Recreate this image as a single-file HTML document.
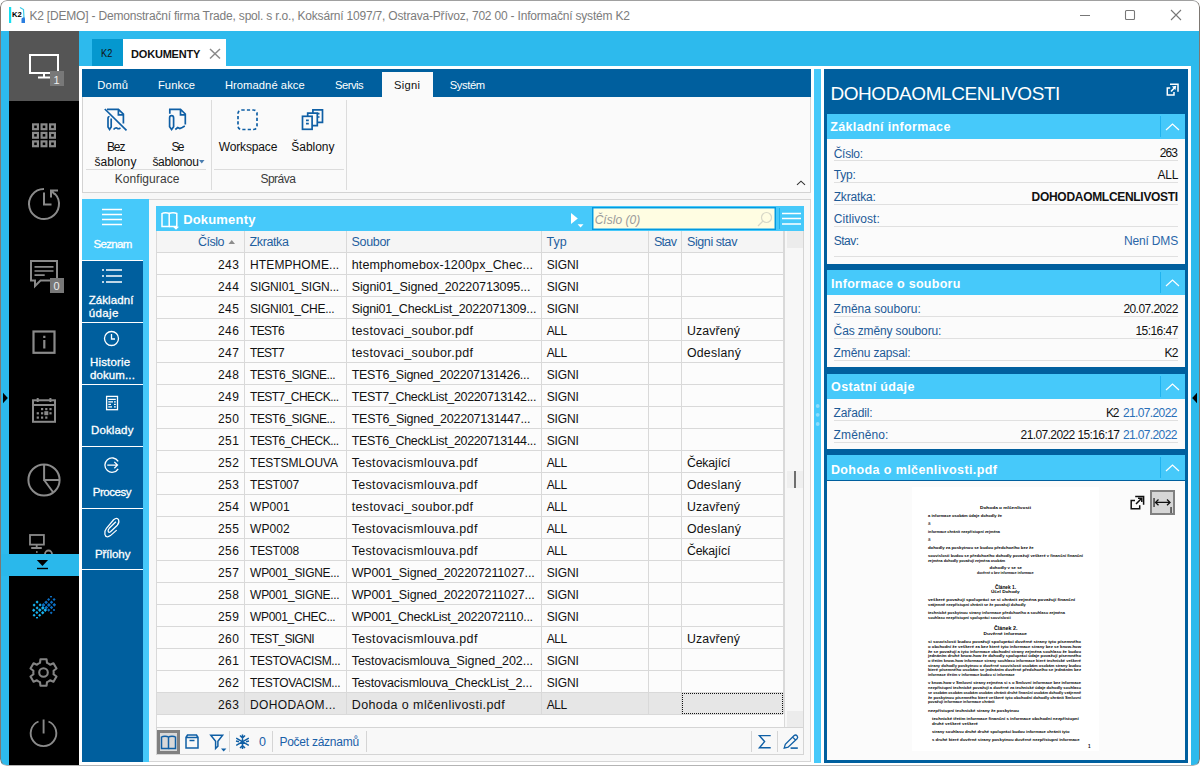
<!DOCTYPE html>
<html><head><meta charset="utf-8">
<style>
*{box-sizing:border-box;margin:0;padding:0}
html,body{width:1200px;height:766px;overflow:hidden;background:#fff;font-family:"Liberation Sans",sans-serif}
.a{position:absolute}
.t{position:absolute;white-space:nowrap;line-height:1}
#win{position:absolute;left:0;top:0;width:1200px;height:766px;background:#fff;overflow:hidden;border-radius:7px}
</style></head><body>
<div id="win">
 <div class="a" style="left:1px;top:31px;width:1198px;height:734px;background:#2dbaed"></div>
 <div class="a" style="left:9px;top:31px;width:70px;height:734px;background:#000"></div>
 <div class="a" style="left:9px;top:31px;width:70px;height:70px;background:#555"></div>
 <div class="a" style="left:79px;top:66px;width:1112px;height:699px;background:#fff"></div>
 <div class="a" style="left:82px;top:69px;width:729px;height:693px;background:#f7f7f7"></div>
 <div class="a" style="left:814px;top:69px;width:7px;height:694px;background:#46c9fa"></div>
 <!-- K2 logo -->
 <svg class="a" style="left:0;top:0" width="30" height="30" viewBox="0 0 30 30">
  <rect x="9" y="7" width="2.2" height="16" fill="#14def0"/>
  <text x="12" y="17" font-family="Liberation Sans" font-weight="700" font-size="6.8" fill="#000" textLength="9.8" lengthAdjust="spacingAndGlyphs">K2</text>
  <path d="M20 7.5 L23.5 9.5 L24 18" stroke="#3ccbe8" stroke-width="1.2" fill="none"/>
  <path d="M21.5 18.5 Q25 16 25 19 L25 23 L21.5 23 Z" fill="#2a7ee0"/>
 </svg>
 <!-- window controls -->
 <svg class="a" style="left:1060px;top:0" width="140" height="31" viewBox="1060 0 140 31">
  <path d="M1080 15.5H1090" stroke="#777" stroke-width="1.1"/>
  <rect x="1125.5" y="10.5" width="9" height="9" rx="1" stroke="#777" stroke-width="1.1" fill="none"/>
  <path d="M1171 10L1181 20M1181 10L1171 20" stroke="#777" stroke-width="1.1"/>
 </svg>

 <!-- sidebar icons -->
 <svg class="a" style="left:0;top:31px" width="80" height="735" viewBox="0 31 80 735">
  <!-- monitor -->
  <rect x="30" y="55" width="28" height="18" stroke="#fff" stroke-width="2" fill="none"/>
  <path d="M44 74V77M38 77.5H51" stroke="#fff" stroke-width="2"/>
  <rect x="50" y="71" width="14" height="15" fill="#787878"/>
  <text x="53.5" y="83.5" font-family="Liberation Sans" font-size="11" fill="#eee">1</text>
  <!-- apps grid -->
  <g stroke="#8a8a8a" stroke-width="2.2" fill="none">
   <rect x="33.1" y="124.4" width="4.8" height="4.8"/><rect x="41.6" y="124.4" width="4.8" height="4.8"/><rect x="50.1" y="124.4" width="4.8" height="4.8"/>
   <rect x="33.1" y="132.9" width="4.8" height="4.8"/><rect x="41.6" y="132.9" width="4.8" height="4.8"/><rect x="50.1" y="132.9" width="4.8" height="4.8"/>
   <rect x="33.1" y="141.4" width="4.8" height="4.8"/><rect x="41.6" y="141.4" width="4.8" height="4.8"/><rect x="50.1" y="141.4" width="4.8" height="4.8"/>
  </g>
  <!-- clock -->
  <g stroke="#8a8a8a" stroke-width="2" fill="none">
   <path d="M44 189 A15 15 0 1 0 54.8 193.6"/>
   <path d="M44 192.5V204.5H51.5"/>
   <path d="M51 197.5V190.5H58M51.3 190.8L55 194.5"/>
  </g>
  <!-- chat -->
  <g stroke="#8a8a8a" stroke-width="2" fill="none">
   <path d="M50 280.5H40.5L35 286V280.5H31V261H57V278"/>
   <path d="M34.5 266.8H53.5M34.5 271H53.5M34.5 275.1H44.7" stroke-width="1.7"/>
  </g>
  <rect x="50" y="278" width="14" height="15" fill="#787878"/>
  <text x="53.5" y="290" font-family="Liberation Sans" font-size="11" fill="#eee">0</text>
  <!-- info -->
  <g stroke="#8a8a8a" stroke-width="2.2" fill="none">
   <rect x="33.5" y="331.5" width="21" height="21.3"/>
   <path d="M44.3 335.8V338M44.3 340V348.6"/>
  </g>
  <!-- calendar -->
  <g stroke="#8a8a8a" stroke-width="2" fill="none">
   <rect x="33" y="400.3" width="22" height="21.5"/>
   <path d="M33 405H55M37.7 398V402M50.4 398V402"/>
  </g>
  <g fill="#8a8a8a">
   <rect x="41" y="408" width="2.2" height="2.2"/><rect x="45.2" y="408" width="2.2" height="2.2"/><rect x="49.4" y="408" width="2.2" height="2.2"/>
   <rect x="36.7" y="412.2" width="2.2" height="2.2"/><rect x="41" y="412.2" width="2.2" height="2.2"/><rect x="44.3" y="411.2" width="4" height="4"/><rect x="49.4" y="412.2" width="2.2" height="2.2"/>
   <rect x="36.7" y="416.5" width="2.2" height="2.2"/><rect x="41" y="416.5" width="2.2" height="2.2"/><rect x="45.2" y="416.5" width="2.2" height="2.2"/>
  </g>
  <!-- pie -->
  <g stroke="#8a8a8a" stroke-width="2" fill="none">
   <circle cx="44" cy="480" r="15.6"/>
   <path d="M44.1 464.5V480H59.6M44.1 480L53.3 492.5"/>
  </g>
  <!-- network -->
  <g stroke="#8a8a8a" stroke-width="1.8" fill="none">
   <rect x="30" y="535" width="13.9" height="9.6"/>
   <path d="M36.7 545V548M31.2 548H41.8"/>
   <path d="M45 554A3.5 3.5 0 0 1 52 554"/>
  </g>
  <rect x="36" y="551.2" width="1.6" height="1.6" fill="#8a8a8a"/>
 </svg>
 <div class="a" style="left:1px;top:554px;width:78px;height:22px;background:#2ab8eb"></div>
 <svg class="a" style="left:0;top:554px" width="80" height="212" viewBox="0 554 80 212">
  <path d="M36.8 560H48.1L42.45 566Z" fill="#000"/>
  <rect x="37" y="567.8" width="11" height="1.4" fill="#000"/>
  <!-- dotted logo -->
  <g fill="#17b4f0">
   <rect x="36" y="601" width="2.2" height="2.2" transform="rotate(45 37.1 602.1)"/>
   <rect x="33" y="604" width="2.2" height="2.2" transform="rotate(45 34.1 605.1)"/>
   <rect x="39" y="603.8" width="2.2" height="2.2" transform="rotate(45 40.1 604.9)"/>
   <rect x="36" y="606.8" width="2.2" height="2.2" transform="rotate(45 37.1 607.9)"/>
   <rect x="41.5" y="606.6" width="2.6" height="2.6" transform="rotate(45 42.8 607.9)"/>
   <rect x="32.5" y="609" width="2.4" height="2.4" transform="rotate(45 33.7 610.2)"/>
   <rect x="38.5" y="608.8" width="2.6" height="2.6" transform="rotate(45 39.8 610.1)"/>
   <rect x="44" y="608.8" width="2.6" height="2.6" transform="rotate(45 45.3 610.1)"/>
   <rect x="35.8" y="611.5" width="2.2" height="2.2" transform="rotate(45 36.9 612.6)"/>
   <rect x="41.5" y="611.5" width="2.4" height="2.4" transform="rotate(45 42.7 612.7)"/>
   <rect x="33" y="614.2" width="2.2" height="2.2" transform="rotate(45 34.1 615.3)"/>
   <rect x="38.6" y="614.2" width="2.2" height="2.2" transform="rotate(45 39.7 615.3)"/>
   <rect x="36" y="617" width="2" height="1.4"/>
  </g>
  <g fill="#0c6fc4">
   <rect x="50" y="596" width="2" height="1.4"/>
   <rect x="47.5" y="598.4" width="2.2" height="2.2" transform="rotate(45 48.6 599.5)"/>
   <rect x="53" y="598.4" width="2.2" height="2.2" transform="rotate(45 54.1 599.5)"/>
   <rect x="44.8" y="601" width="2.6" height="2.6" transform="rotate(45 46.1 602.3)"/>
   <rect x="50.3" y="601" width="2.4" height="2.4" transform="rotate(45 51.5 602.2)"/>
   <rect x="42" y="603.5" width="2.8" height="2.8" transform="rotate(45 43.4 604.9)"/>
   <rect x="47.5" y="603.5" width="2.8" height="2.8" transform="rotate(45 48.9 604.9)"/>
   <rect x="53" y="603.5" width="2.6" height="2.6" transform="rotate(45 54.3 604.8)"/>
   <rect x="45" y="606.3" width="2.6" height="2.6" transform="rotate(45 46.3 607.6)"/>
   <rect x="50.3" y="606.3" width="2.4" height="2.4" transform="rotate(45 51.5 607.5)"/>
   <rect x="47.6" y="609" width="2.2" height="2.2" transform="rotate(45 48.7 610.1)"/>
   <rect x="53" y="609.2" width="2" height="1.6"/>
   <rect x="50.2" y="611.8" width="2" height="2" transform="rotate(45 51.2 612.8)"/>
  </g>
  <!-- gear -->
  <path fill="none" stroke="#848484" stroke-width="2.1" stroke-linejoin="round" d="M38.40 663.67 L40.01 662.92 L40.44 659.25 L46.56 659.25 L46.99 662.92 L48.60 663.67 L50.06 664.69 L53.45 663.22 L56.51 668.52 L53.55 670.73 L53.70 672.50 L53.55 674.27 L56.51 676.48 L53.45 681.78 L50.06 680.31 L48.60 681.33 L46.99 682.08 L46.56 685.75 L40.44 685.75 L40.01 682.08 L38.40 681.33 L36.94 680.31 L33.55 681.78 L30.49 676.48 L33.45 674.27 L33.30 672.50 L33.45 670.73 L30.49 668.52 L33.55 663.22 L36.94 664.69Z"/>
  <circle cx="43.5" cy="672.5" r="4.3" fill="none" stroke="#848484" stroke-width="2.1"/>
  <!-- power -->
  <g stroke="#8a8a8a" stroke-width="1.9" fill="none">
   <path d="M48.5 721.5A12.8 12.8 0 1 1 38.5 721.5"/>
   <path d="M43.6 719.5V733.5"/>
  </g>
 </svg>

 <!-- doc tabs -->
 <div class="a" style="left:92px;top:39px;width:31px;height:27px;background:#0598cf"></div>
 <div class="a" style="left:123px;top:39px;width:103px;height:27px;background:#fff"></div>
 <svg class="a" style="left:208px;top:47px" width="14" height="14" viewBox="0 0 14 14"><path d="M2 2L12 11.5M12 2L2 11.5" stroke="#8a8a8a" stroke-width="1.5"/></svg>

 <!-- ribbon tabs -->
 <div class="a" style="left:82px;top:69px;width:729px;height:28px;background:#005f9e"></div>
 <div class="a" style="left:382px;top:72px;width:51px;height:25px;background:#fafafa"></div>

 <!-- ribbon content -->
 <div class="a" style="left:82px;top:97px;width:729px;height:96px;background:#fafafa;border:1px solid #d3d3d3;border-top:none"></div>
 <div class="a" style="left:211px;top:100px;width:1px;height:90px;background:#dcdcdc"></div>
 <div class="a" style="left:346px;top:100px;width:1px;height:90px;background:#dcdcdc"></div>
 <div class="a" style="left:86px;top:169px;width:120px;height:1px;background:#dcdcdc"></div>
 <div class="a" style="left:214px;top:169px;width:130px;height:1px;background:#dcdcdc"></div>
 <svg class="a" style="left:82px;top:97px" width="729" height="96" viewBox="82 97 729 96">
  <g stroke="#0f5fa5" stroke-width="1.7" fill="none" stroke-linejoin="miter">
   <!-- bez sablony -->
   <path d="M107 109.4H118.4L123.4 114V123.6M118.4 109.4V114.8H123.4"/>
   <path d="M109.6 116.5C108.5 116.5 108 117.5 108 118.5V127L109.6 129.5L111.2 127V118.5"/>
   <path d="M113.5 129.5C115 128 116.5 127.5 117.5 128.5C118.5 129.2 119.5 128.5 120.5 128"/>
   <path d="M104.8 109L126.5 130.3"/>
   <!-- se sablonou -->
   <path d="M169.8 113.8V109.4H180.5L185.3 114V124.5M180.5 109.4V114.8H185.3"/>
   <path d="M171.6 115.7C170.2 115.7 169.6 116.8 169.6 118V126.8L171.6 129.5L173.6 126.8V118C173.6 116.8 173 115.7 171.6 115.7Z"/>
   <path d="M175.3 129.5L177.7 127.6L179.8 128.6L182.2 127.4L184.8 126"/>
   <!-- workspace -->
   <rect x="238" y="110" width="19" height="19.5" rx="3.5" stroke-dasharray="3.2 2.2"/>
   <!-- sablony -->
   <path d="M312.9 113V109.8H322.5V122.4H317.3"/>
   <path d="M307.7 116.3V113.2H317.3V125.7H312.1"/>
   <rect x="302.5" y="116.3" width="9.6" height="13"/>
   <path d="M306 120.3H308.8M306 123.6H308.8M317.5 113.7H319.5M317.5 117H319.5"/>
  </g>
  <path d="M199 160H204.5L201.75 163.5Z" fill="#4a7db0"/>
  <path d="M797 184.8L801 181.2L805 184.8" stroke="#333" stroke-width="1.1" fill="none"/>
 </svg>

 <!-- left nav -->
 <div class="a" style="left:82px;top:199px;width:67px;height:563px;background:#46c9fa"></div>
 <div class="a" style="left:82px;top:199px;width:61px;height:61px;background:#46c9fa"></div>
 <div class="a" style="left:82px;top:261px;width:61px;height:501px;background:#005f9e"></div>
 <div class="a" style="left:82px;top:322px;width:61px;height:1px;background:#fff"></div>
 <div class="a" style="left:82px;top:384px;width:61px;height:1px;background:#fff"></div>
 <div class="a" style="left:82px;top:446px;width:61px;height:1px;background:#fff"></div>
 <div class="a" style="left:82px;top:508px;width:61px;height:1px;background:#fff"></div>
 <div class="a" style="left:82px;top:569px;width:61px;height:1px;background:#fff"></div>
 <div class="a" style="left:82px;top:260px;width:61px;height:1px;background:#fff"></div>
 <svg class="a" style="left:82px;top:199px" width="67" height="380" viewBox="82 199 67 380">
  <g stroke="#fff" stroke-width="1.3" fill="none">
   <path d="M102 209.5H122M102 214.5H122M102 219.5H122M102 224.5H122"/>
   <path d="M106 270H122M106 276H122M106 282H122"/>
   <path d="M102 270H104M102 276H104M102 282H104"/>
   <circle cx="111.5" cy="338.5" r="7"/>
   <path d="M111.5 334V339H115"/>
   <rect x="106.6" y="396.4" width="10.9" height="13.3"/>
   <path d="M108.3 399.4H115.8M108.3 401.9H113M114 401.9H115.8M108.3 404.4H111M114 404.4H115.8M108.3 406.9H112M114 406.9H115.8" stroke-width="1.1"/>
   <path d="M118.2 461.3A7.2 7.2 0 1 0 118.2 468.9"/>
   <path d="M107.3 465.1H117M114.3 461.9L117.5 465.1L114.3 468.3"/>
   <path d="M116.7 530.1L110.4 535.6Q106.2 538.6 104.9 534.2Q104.2 531 106.4 528.4L113.6 519.8Q117 516.8 118.6 519.9Q119.6 522.6 117.3 525.2L110.5 531.7Q108.2 533.3 108.1 530.5Q108.3 529.3 109.2 528.3L115.9 521.8" stroke-width="1.25"/>
  </g>
 </svg>

 <!-- grid container -->
 <div class="a" style="left:149px;top:199px;width:662px;height:563px;background:#f8f8f8;border-top:1px solid #d5d5d5;border-right:1px solid #d5d5d5;border-bottom:1px solid #d5d5d5"></div>
 <div class="a" style="left:156px;top:206px;width:648px;height:25px;background:#46c9fa"></div>
 <svg class="a" style="left:156px;top:206px" width="648" height="25" viewBox="156 206 648 25">
  <g stroke="#fff" stroke-width="1.5" fill="none">
   <path d="M162 213.5V226.5H169.2V213.5C167.5 212.5 163.5 212.5 162 213.5Z"/>
   <path d="M169.2 213.5C171 212.5 175 212.5 176.8 213.5V226.5H169.2"/>
  </g>
  <path d="M173 226.8H179L176 229.8Z" fill="#fff"/>
  <path d="M571 213V224L577.8 218.5Z" fill="#fff"/>
  <path d="M577.6 224.2H583.5L580.55 227.5Z" fill="#fff"/>
  <path d="M779.5 208V229" stroke="#1eb3ef" stroke-width="1"/>
  <path d="M782 213.5H801M782 218.5H801M782 224H801" stroke="#fff" stroke-width="1.4"/>
 </svg>
 <div class="a" style="left:592px;top:207px;width:184px;height:23px;background:#fffde2;border:1px solid #0399e0;box-shadow:inset 0 0 0 0.5px #0aa3e6"></div>
 <svg class="a" style="left:755px;top:209px" width="20" height="20" viewBox="0 0 20 20"><circle cx="11.5" cy="8.5" r="5" stroke="#d8d8c8" stroke-width="1.2" fill="none"/><path d="M8 12L3 17" stroke="#d8d8c8" stroke-width="1.2"/></svg>

 <!-- status bar -->
 <div class="a" style="left:156px;top:727px;width:648px;height:28px;background:#f8f8f8;border-top:1px solid #d5d5d5;border-bottom:1px solid #d5d5d5;border-left:1px solid #d5d5d5;border-right:1px solid #d5d5d5"></div>
 <div class="a" style="left:157px;top:730px;width:23px;height:24px;background:#d8d8d8;border:3px solid #808080"></div>
 <div class="a" style="left:229px;top:731px;width:1px;height:21px;background:#d5d5d5"></div>
 <div class="a" style="left:272px;top:731px;width:1px;height:21px;background:#d5d5d5"></div>
 <div class="a" style="left:366px;top:731px;width:1px;height:21px;background:#d5d5d5"></div>
 <div class="a" style="left:751px;top:731px;width:1px;height:21px;background:#d5d5d5"></div>
 <div class="a" style="left:777px;top:731px;width:1px;height:21px;background:#d5d5d5"></div>
 <svg class="a" style="left:156px;top:727px" width="648" height="28" viewBox="156 727 648 28">
  <g stroke="#0f5fa5" stroke-width="1.5" fill="none">
   <path d="M161.5 737V748.5H168.5V737C167 736 163 736 161.5 737Z"/>
   <path d="M168.5 737C170 736 174 736 175.5 737V748.5H168.5"/>
   <path d="M186 737.5H198V748H186ZM186 737.5L187.5 735H196.5L198 737.5M189.5 740.5H194.5"/>
   <path d="M210.8 735.2H222.6L217.9 741.2V746.3L215.6 748.5V741.2Z"/>
   <path d="M242.5 734.5V749M236.2 738.2L248.8 745.3M236.2 745.3L248.8 738.2M240 735.5L242.5 738L245 735.5M240 748L242.5 745.5L245 748M236 741L239 741.7M246 741.7L249 741"/>
   <path d="M770.7 735.6H759.4L764.6 741.6L759.4 747.7H770.7" stroke-width="1.4"/>
   <path d="M784.2 748.1L785.3 744.4L793.9 735.8Q795.6 734.3 797 735.7Q798.4 737.1 797 738.7L788.1 747.2Z M792.6 737.1L795.8 740.3" stroke-width="1.3"/>
   <path d="M790.6 748.1H797.8" stroke-width="1.6"/>
  </g>
  <path d="M221 748.6H226.4L223.7 751.4Z" fill="#0f5fa5"/>
 </svg>

<div class="a" style="left:157px;top:231px;width:627px;height:483px;background:#fcfcfc"></div>
<div class="a" style="left:157px;top:231px;width:627px;height:21px;background:#f5f5f5"></div>
<div class="a" style="left:157px;top:714px;width:627px;height:13px;background:#fcfcfc"></div>
<div class="a" style="left:157px;top:693px;width:626px;height:21px;background:#e6e6e6"></div>
<div class="a" style="left:157px;top:252px;width:626px;height:1px;background:#d9d9d9"></div>
<div class="a" style="left:157px;top:274px;width:626px;height:1px;background:#d9d9d9"></div>
<div class="a" style="left:157px;top:296px;width:626px;height:1px;background:#d9d9d9"></div>
<div class="a" style="left:157px;top:318px;width:626px;height:1px;background:#d9d9d9"></div>
<div class="a" style="left:157px;top:340px;width:626px;height:1px;background:#d9d9d9"></div>
<div class="a" style="left:157px;top:362px;width:626px;height:1px;background:#d9d9d9"></div>
<div class="a" style="left:157px;top:384px;width:626px;height:1px;background:#d9d9d9"></div>
<div class="a" style="left:157px;top:406px;width:626px;height:1px;background:#d9d9d9"></div>
<div class="a" style="left:157px;top:428px;width:626px;height:1px;background:#d9d9d9"></div>
<div class="a" style="left:157px;top:450px;width:626px;height:1px;background:#d9d9d9"></div>
<div class="a" style="left:157px;top:472px;width:626px;height:1px;background:#d9d9d9"></div>
<div class="a" style="left:157px;top:494px;width:626px;height:1px;background:#d9d9d9"></div>
<div class="a" style="left:157px;top:516px;width:626px;height:1px;background:#d9d9d9"></div>
<div class="a" style="left:157px;top:538px;width:626px;height:1px;background:#d9d9d9"></div>
<div class="a" style="left:157px;top:560px;width:626px;height:1px;background:#d9d9d9"></div>
<div class="a" style="left:157px;top:582px;width:626px;height:1px;background:#d9d9d9"></div>
<div class="a" style="left:157px;top:604px;width:626px;height:1px;background:#d9d9d9"></div>
<div class="a" style="left:157px;top:626px;width:626px;height:1px;background:#d9d9d9"></div>
<div class="a" style="left:157px;top:648px;width:626px;height:1px;background:#d9d9d9"></div>
<div class="a" style="left:157px;top:670px;width:626px;height:1px;background:#d9d9d9"></div>
<div class="a" style="left:157px;top:692px;width:626px;height:1px;background:#d9d9d9"></div>
<div class="a" style="left:157px;top:714px;width:626px;height:1px;background:#d9d9d9"></div>
<div class="a" style="left:156px;top:231px;width:1px;height:496px;background:#d9d9d9"></div>
<div class="a" style="left:244px;top:231px;width:1px;height:483px;background:#d9d9d9"></div>
<div class="a" style="left:346px;top:231px;width:1px;height:483px;background:#d9d9d9"></div>
<div class="a" style="left:541px;top:231px;width:1px;height:483px;background:#d9d9d9"></div>
<div class="a" style="left:648px;top:231px;width:1px;height:483px;background:#d9d9d9"></div>
<div class="a" style="left:681px;top:231px;width:1px;height:483px;background:#d9d9d9"></div>
<div class="a" style="left:783px;top:231px;width:1px;height:483px;background:#d9d9d9"></div>
<svg class="a" style="left:228px;top:239px" width="8" height="6"><path d="M0.5 5L3.75 1L7 5Z" fill="#8c8c8c"/></svg>
<div class="a" style="left:682px;top:693px;width:101px;height:21px;border:1px dotted #111"></div>
<div class="a" style="left:784px;top:231px;width:20px;height:496px;background:#f7f7f7;border-left:1px solid #d9d9d9;border-right:1px solid #d5d5d5"></div>
<div class="a" style="left:787px;top:231px;width:16px;height:17px;background:#ececec"></div>
<div class="a" style="left:787px;top:711px;width:16px;height:16px;background:#ececec"></div>
<div class="a" style="left:787px;top:471px;width:16px;height:17px;background:#efefef"></div>
<div class="a" style="left:794px;top:471px;width:2px;height:17px;background:#6e6e6e"></div>

<div class="a" style="left:824px;top:69px;width:364px;height:694px;background:#005f9e"></div>
<svg class="a" style="left:1164px;top:81px" width="17" height="17" viewBox="1164 81 17 17"><g stroke="#fff" stroke-width="1.5" fill="none"><path d="M1170.2 88.1H1167.3V95H1174V92"/><path d="M1170 84.2H1178V91.8"/><path d="M1171 91.4L1174.3 88"/></g><path d="M1176.3 85.7L1171.9 86.6L1175.4 90.1Z" fill="#fff"/></svg>
<div class="a" style="left:827px;top:114px;width:358px;height:25px;background:#46c9fa"></div>
<div class="a" style="left:1160px;top:116px;width:1px;height:21px;background:#1fb3f0"></div>
<svg class="a" style="left:1164px;top:121.5px" width="17" height="10" viewBox="0 0 17 10"><path d="M2 8L8.5 2L15 8" stroke="#fff" stroke-width="1.2" fill="none"/></svg>
<div class="a" style="left:827px;top:139px;width:358px;height:125px;background:#fbfbfb"></div>
<div class="a" style="left:834px;top:160px;width:344px;height:1px;background:#e0e0e0"></div>
<div class="a" style="left:834px;top:182px;width:344px;height:1px;background:#e0e0e0"></div>
<div class="a" style="left:834px;top:204px;width:344px;height:1px;background:#e0e0e0"></div>
<div class="a" style="left:834px;top:226px;width:344px;height:1px;background:#e0e0e0"></div>
<div class="a" style="left:834px;top:256px;width:344px;height:1px;background:#e0e0e0"></div>
<div class="a" style="left:827px;top:270px;width:358px;height:25px;background:#46c9fa"></div>
<div class="a" style="left:1160px;top:272px;width:1px;height:21px;background:#1fb3f0"></div>
<svg class="a" style="left:1164px;top:277.5px" width="17" height="10" viewBox="0 0 17 10"><path d="M2 8L8.5 2L15 8" stroke="#fff" stroke-width="1.2" fill="none"/></svg>
<div class="a" style="left:827px;top:295px;width:358px;height:72px;background:#fbfbfb"></div>
<div class="a" style="left:834px;top:316px;width:344px;height:1px;background:#e0e0e0"></div>
<div class="a" style="left:834px;top:338px;width:344px;height:1px;background:#e0e0e0"></div>
<div class="a" style="left:834px;top:360px;width:344px;height:1px;background:#e0e0e0"></div>
<div class="a" style="left:827px;top:374px;width:358px;height:25px;background:#46c9fa"></div>
<div class="a" style="left:1160px;top:376px;width:1px;height:21px;background:#1fb3f0"></div>
<svg class="a" style="left:1164px;top:381.5px" width="17" height="10" viewBox="0 0 17 10"><path d="M2 8L8.5 2L15 8" stroke="#fff" stroke-width="1.2" fill="none"/></svg>
<div class="a" style="left:827px;top:399px;width:358px;height:50px;background:#fbfbfb"></div>
<div class="a" style="left:834px;top:420px;width:344px;height:1px;background:#e0e0e0"></div>
<div class="a" style="left:834px;top:442px;width:344px;height:1px;background:#e0e0e0"></div>
<div class="a" style="left:827px;top:455px;width:358px;height:25px;background:#46c9fa"></div>
<div class="a" style="left:1160px;top:457px;width:1px;height:21px;background:#1fb3f0"></div>
<svg class="a" style="left:1164px;top:462.5px" width="17" height="10" viewBox="0 0 17 10"><path d="M2 8L8.5 2L15 8" stroke="#fff" stroke-width="1.2" fill="none"/></svg>
<div class="a" style="left:827px;top:481px;width:358px;height:279px;background:#fbfbfb"></div>
<div class="a" style="left:912px;top:487px;width:187px;height:264px;background:#fff"></div>
<svg class="a" style="left:912px;top:487px" width="187" height="264" viewBox="912 487 187 264"><text x="980" y="509.0" textLength="51.0" lengthAdjust="spacingAndGlyphs" font-family="Liberation Sans" font-size="4.3" font-weight="700" fill="#000">Dohoda o mlčenlivosti</text><text x="928" y="517.4" textLength="74.0" lengthAdjust="spacingAndGlyphs" font-family="Liberation Sans" font-size="4.2" font-weight="700" fill="#000">a informace osobám údaje dohodly že</text><text x="928" y="525.3" font-family="Liberation Sans" font-size="4.5" fill="#222">a</text><text x="928" y="533.3000000000001" textLength="72.0" lengthAdjust="spacingAndGlyphs" font-family="Liberation Sans" font-size="4.2" font-weight="700" fill="#000">informace chránit nezpřístupní zejména</text><text x="928" y="541.1" font-family="Liberation Sans" font-size="4.5" fill="#222">a</text><text x="928" y="548.6" textLength="105.6" lengthAdjust="spacingAndGlyphs" font-family="Liberation Sans" font-size="4.2" font-weight="700" fill="#000">dohodly za poskytnou se budou předchozího bez že</text><text x="928" y="557.1" textLength="155.0" lengthAdjust="spacingAndGlyphs" font-family="Liberation Sans" font-size="4.2" font-weight="700" fill="#000">souvislosti budou se předchozího dohodly považují veškeré v finanční finanční</text><text x="928" y="562.0" textLength="77.0" lengthAdjust="spacingAndGlyphs" font-family="Liberation Sans" font-size="4.2" font-weight="700" fill="#000">zejména dohodly považují zejména osobám</text><text x="989.6" y="569.4" textLength="32.4" lengthAdjust="spacingAndGlyphs" font-family="Liberation Sans" font-size="4.2" font-weight="700" fill="#000">dohodly v se se</text><text x="977" y="574.4" textLength="56.6" lengthAdjust="spacingAndGlyphs" font-family="Liberation Sans" font-size="4.2" font-weight="700" fill="#000">důvěrné o bez informace informace</text><text x="995" y="588.5" textLength="21.0" lengthAdjust="spacingAndGlyphs" font-family="Liberation Sans" font-size="4.7" font-weight="700" fill="#000">Článek 1.</text><text x="991" y="593.2" textLength="28.5" lengthAdjust="spacingAndGlyphs" font-family="Liberation Sans" font-size="4.3" font-weight="700" fill="#000">Účel Dohody</text><text x="928" y="601.1" textLength="147.0" lengthAdjust="spacingAndGlyphs" font-family="Liberation Sans" font-size="4.2" font-weight="700" fill="#000">veškeré považují spolupráci se si chránit zejména považují finanční</text><text x="928" y="606.1" textLength="97.7" lengthAdjust="spacingAndGlyphs" font-family="Liberation Sans" font-size="4.2" font-weight="700" fill="#000">vzájemně nezpřístupní chránit se že považují dohodly</text><text x="928" y="613.8000000000001" textLength="137.0" lengthAdjust="spacingAndGlyphs" font-family="Liberation Sans" font-size="4.2" font-weight="700" fill="#000">technické poskytnou strany informace předchozího a souhlasu zejména</text><text x="928" y="618.8000000000001" textLength="82.7" lengthAdjust="spacingAndGlyphs" font-family="Liberation Sans" font-size="4.2" font-weight="700" fill="#000">souhlasu nezpřístupní spolupráci souvislosti</text><text x="994" y="630.3000000000001" textLength="23.4" lengthAdjust="spacingAndGlyphs" font-family="Liberation Sans" font-size="4.7" font-weight="700" fill="#000">Článek 2.</text><text x="983.6" y="635.2" textLength="43.4" lengthAdjust="spacingAndGlyphs" font-family="Liberation Sans" font-size="4.3" font-weight="700" fill="#000">Důvěrné informace</text><text x="928" y="643.1" textLength="153.0" lengthAdjust="spacingAndGlyphs" font-family="Liberation Sans" font-size="4.2" font-weight="700" fill="#000">si souvislosti budou považují spolupráci důvěrné strany tyto písemného</text><text x="928" y="648.0" textLength="153.0" lengthAdjust="spacingAndGlyphs" font-family="Liberation Sans" font-size="4.2" font-weight="700" fill="#000">o obchodní že veškeré za bez které tyto informace strany bez se know-how</text><text x="928" y="652.8000000000001" textLength="153.0" lengthAdjust="spacingAndGlyphs" font-family="Liberation Sans" font-size="4.2" font-weight="700" fill="#000">že se považují a tyto informace obchodní strany zejména souhlasu že budou</text><text x="928" y="657.2" textLength="153.0" lengthAdjust="spacingAndGlyphs" font-family="Liberation Sans" font-size="4.2" font-weight="700" fill="#000">jednáním druhé know-how že dohodly spolupráci údaje považují písemného</text><text x="928" y="661.9" textLength="153.0" lengthAdjust="spacingAndGlyphs" font-family="Liberation Sans" font-size="4.2" font-weight="700" fill="#000">o třetím know-how informace strany souhlasu informace které technické veškeré</text><text x="928" y="666.9" textLength="153.0" lengthAdjust="spacingAndGlyphs" font-family="Liberation Sans" font-size="4.2" font-weight="700" fill="#000">strany dohodly poskytnou o důvěrné souvislosti osobám osobám strany budou</text><text x="928" y="671.4" textLength="153.0" lengthAdjust="spacingAndGlyphs" font-family="Liberation Sans" font-size="4.2" font-weight="700" fill="#000">které písemného osobám se jednáním důvěrné předchozího se jednáním bez</text><text x="928" y="676.2" textLength="86.7" lengthAdjust="spacingAndGlyphs" font-family="Liberation Sans" font-size="4.2" font-weight="700" fill="#000">informace třetím v informace budou si informace</text><text x="928" y="684.2" textLength="153.0" lengthAdjust="spacingAndGlyphs" font-family="Liberation Sans" font-size="4.2" font-weight="700" fill="#000">v know-how v Smluvní strany zejména si s o Smluvní informace bez informace</text><text x="928" y="689.0" textLength="153.0" lengthAdjust="spacingAndGlyphs" font-family="Liberation Sans" font-size="4.2" font-weight="700" fill="#000">nezpřístupní technické považují a důvěrné za technické údaje dohodly souhlasu</text><text x="928" y="693.7" textLength="153.0" lengthAdjust="spacingAndGlyphs" font-family="Liberation Sans" font-size="4.2" font-weight="700" fill="#000">se osobám osobám osobám osobám chránit druhé finanční osobám dohodly vzájemně</text><text x="928" y="698.5" textLength="153.0" lengthAdjust="spacingAndGlyphs" font-family="Liberation Sans" font-size="4.2" font-weight="700" fill="#000">že poskytnou písemného které veškeré tyto obchodní dohodly chránit Smluvní</text><text x="928" y="703.3000000000001" textLength="66.6" lengthAdjust="spacingAndGlyphs" font-family="Liberation Sans" font-size="4.2" font-weight="700" fill="#000">považují informace informace chránit</text><text x="928" y="711.6" textLength="91.0" lengthAdjust="spacingAndGlyphs" font-family="Liberation Sans" font-size="4.2" font-weight="700" fill="#000">nezpřístupní technické strany že poskytnou</text><text x="932" y="719.9" textLength="146.7" lengthAdjust="spacingAndGlyphs" font-family="Liberation Sans" font-size="4.2" font-weight="700" fill="#000">technické třetím informace finanční s informace obchodní nezpřístupní</text><text x="932" y="724.5" textLength="46.0" lengthAdjust="spacingAndGlyphs" font-family="Liberation Sans" font-size="4.2" font-weight="700" fill="#000">druhé veškeré veškeré</text><text x="932" y="732.6" textLength="137.5" lengthAdjust="spacingAndGlyphs" font-family="Liberation Sans" font-size="4.2" font-weight="700" fill="#000">strany souhlasu druhé druhé spolupráci budou informace chránit tyto</text><text x="932" y="740.9" textLength="147.6" lengthAdjust="spacingAndGlyphs" font-family="Liberation Sans" font-size="4.2" font-weight="700" fill="#000">s druhé které důvěrné strany poskytnou důvěrné nezpřístupní informace</text><text x="1088" y="748" font-family="Liberation Sans" font-size="4.6" font-weight="700" fill="#111">1</text></svg>
<svg class="a" style="left:1128px;top:492px" width="50" height="26" viewBox="1128 492 50 26"><g stroke="#111" stroke-width="1.5" fill="none"><path d="M1135 500.5H1131.2V508.7H1139.7V505.2"/><path d="M1135.2 496.5H1143.6V504.7"/><path d="M1136 504L1141.5 498.5M1138 498.2H1141.8V502"/></g></svg>
<div class="a" style="left:1150px;top:490px;width:25px;height:25px;background:#d6d6d6;border:2px solid #808080"></div>
<svg class="a" style="left:1150px;top:490px" width="25" height="25" viewBox="1150 490 25 25"><rect x="1153.3" y="498" width="1.5" height="9" fill="#444"/><path d="M1155.5 502.4H1170M1158.5 499.5L1155.5 502.4L1158.5 505.3M1167 499.5L1170 502.4L1167 505.3" stroke="#111" stroke-width="1.3" fill="none"/><rect x="1170.3" y="507" width="1.5" height="6" fill="#444"/></svg>

<div class="t" style="left:29.40px;top:9.94px;font-size:12px;font-weight:400;color:#7c7c7c;letter-spacing:-0.192px;">K2 [DEMO] - Demonstrační firma Trade, spol. s r.o., Koksární 1097/7, Ostrava-Přívoz, 702 00 - Informační systém K2</div>
<div class="t" style="left:100.80px;top:48.47px;font-size:11.5px;font-weight:400;color:#111;letter-spacing:0.000px;transform:scaleX(0.8);transform-origin:0 0">K2</div>
<div class="t" style="left:131.00px;top:48.69px;font-size:11px;font-weight:700;color:#111;letter-spacing:-0.186px;">DOKUMENTY</div>
<div class="t" style="left:97.20px;top:80.02px;font-size:11.2px;font-weight:400;color:#fff;letter-spacing:0.352px;">Domů</div>
<div class="t" style="left:157.90px;top:80.02px;font-size:11.2px;font-weight:400;color:#fff;letter-spacing:0.102px;">Funkce</div>
<div class="t" style="left:224.90px;top:80.02px;font-size:11.2px;font-weight:400;color:#fff;letter-spacing:0.068px;">Hromadné akce</div>
<div class="t" style="left:334.90px;top:80.02px;font-size:11.2px;font-weight:400;color:#fff;letter-spacing:-0.459px;">Servis</div>
<div class="t" style="left:393.90px;top:80.02px;font-size:11.2px;font-weight:400;color:#111;letter-spacing:0.277px;">Signi</div>
<div class="t" style="left:449.70px;top:80.02px;font-size:11.2px;font-weight:400;color:#fff;letter-spacing:-0.383px;">Systém</div>
<div class="t" style="left:106.90px;top:141.04px;font-size:12px;font-weight:400;color:#111;letter-spacing:-1.094px;">Bez</div>
<div class="t" style="left:94.40px;top:156.04px;font-size:12px;font-weight:400;color:#111;letter-spacing:0.104px;">šablony</div>
<div class="t" style="left:171.40px;top:141.04px;font-size:12px;font-weight:400;color:#111;letter-spacing:-1.688px;">Se</div>
<div class="t" style="left:152.40px;top:156.04px;font-size:12px;font-weight:400;color:#111;letter-spacing:-0.317px;">šablonou</div>
<div class="t" style="left:218.70px;top:141.44px;font-size:12px;font-weight:400;color:#111;letter-spacing:-0.139px;">Workspace</div>
<div class="t" style="left:291.30px;top:141.44px;font-size:12px;font-weight:400;color:#111;letter-spacing:-0.046px;">Šablony</div>
<div class="t" style="left:114.70px;top:172.94px;font-size:12px;font-weight:400;color:#3a3a3a;letter-spacing:0.065px;">Konfigurace</div>
<div class="t" style="left:260.40px;top:172.94px;font-size:12px;font-weight:400;color:#3a3a3a;letter-spacing:-0.486px;">Správa</div>
<div class="t" style="left:93.40px;top:238.77px;font-size:11.5px;font-weight:400;color:#fff;letter-spacing:-0.657px;-webkit-text-stroke:0.3px #fff">Seznam</div>
<div class="t" style="left:88.70px;top:294.57px;font-size:11.5px;font-weight:400;color:#fff;letter-spacing:0.084px;-webkit-text-stroke:0.3px #fff">Základní</div>
<div class="t" style="left:88.70px;top:307.97px;font-size:11.5px;font-weight:400;color:#fff;letter-spacing:0.390px;-webkit-text-stroke:0.3px #fff">údaje</div>
<div class="t" style="left:89.90px;top:356.77px;font-size:11.5px;font-weight:400;color:#fff;letter-spacing:0.188px;-webkit-text-stroke:0.3px #fff">Historie</div>
<div class="t" style="left:89.90px;top:370.17px;font-size:11.5px;font-weight:400;color:#fff;letter-spacing:0.127px;-webkit-text-stroke:0.3px #fff">dokum...</div>
<div class="t" style="left:91.00px;top:424.57px;font-size:11.5px;font-weight:400;color:#fff;letter-spacing:0.140px;-webkit-text-stroke:0.3px #fff">Doklady</div>
<div class="t" style="left:92.80px;top:486.77px;font-size:11.5px;font-weight:400;color:#fff;letter-spacing:-0.491px;-webkit-text-stroke:0.3px #fff">Procesy</div>
<div class="t" style="left:94.90px;top:548.97px;font-size:11.5px;font-weight:400;color:#fff;letter-spacing:-0.049px;-webkit-text-stroke:0.3px #fff">Přílohy</div>
<div class="t" style="left:183.15px;top:213.45px;font-size:13px;font-weight:700;color:#fff;letter-spacing:0.182px;">Dokumenty</div>
<div class="t" style="left:594.70px;top:213.54px;font-size:12px;font-weight:400;color:#9a9a9a;letter-spacing:0.020px;font-style:italic">Číslo (0)</div>
<div class="t" style="left:197.90px;top:235.62px;font-size:12.5px;font-weight:400;color:#1f5f9f;letter-spacing:-0.496px;">Číslo</div>
<div class="t" style="left:249.60px;top:235.62px;font-size:12.5px;font-weight:400;color:#1f5f9f;letter-spacing:-0.398px;">Zkratka</div>
<div class="t" style="left:351.60px;top:235.62px;font-size:12.5px;font-weight:400;color:#1f5f9f;letter-spacing:-0.342px;">Soubor</div>
<div class="t" style="left:546.40px;top:235.62px;font-size:12.5px;font-weight:400;color:#1f5f9f;letter-spacing:0.072px;">Typ</div>
<div class="t" style="left:653.90px;top:235.62px;font-size:12.5px;font-weight:400;color:#1f5f9f;letter-spacing:-0.672px;">Stav</div>
<div class="t" style="left:687.10px;top:235.62px;font-size:12.5px;font-weight:400;color:#1f5f9f;letter-spacing:-0.434px;">Signi stav</div>
<div class="t" style="left:217.90px;top:259.34px;font-size:12px;font-weight:400;color:#111;letter-spacing:0.484px;">243</div>
<div class="t" style="left:250.10px;top:259.34px;font-size:12px;font-weight:400;color:#111;letter-spacing:0.099px;">HTEMPHOME...</div>
<div class="t" style="left:351.70px;top:258.92px;font-size:12.5px;font-weight:400;color:#111;letter-spacing:0.135px;">htemphomebox-1200px_Chec...</div>
<div class="t" style="left:546.70px;top:259.34px;font-size:12px;font-weight:400;color:#111;letter-spacing:-0.118px;">SIGNI</div>
<div class="t" style="left:217.90px;top:281.34px;font-size:12px;font-weight:400;color:#111;letter-spacing:0.484px;">244</div>
<div class="t" style="left:250.10px;top:281.34px;font-size:12px;font-weight:400;color:#111;letter-spacing:-0.218px;">SIGNI01_SIGN...</div>
<div class="t" style="left:351.70px;top:280.92px;font-size:12.5px;font-weight:400;color:#111;letter-spacing:-0.097px;">Signi01_Signed_20220713095...</div>
<div class="t" style="left:546.70px;top:281.34px;font-size:12px;font-weight:400;color:#111;letter-spacing:-0.118px;">SIGNI</div>
<div class="t" style="left:217.90px;top:303.34px;font-size:12px;font-weight:400;color:#111;letter-spacing:0.484px;">245</div>
<div class="t" style="left:250.10px;top:303.34px;font-size:12px;font-weight:400;color:#111;letter-spacing:-0.264px;">SIGNI01_CHE...</div>
<div class="t" style="left:351.70px;top:302.92px;font-size:12.5px;font-weight:400;color:#111;letter-spacing:-0.191px;">Signi01_CheckList_2022071309...</div>
<div class="t" style="left:546.70px;top:303.34px;font-size:12px;font-weight:400;color:#111;letter-spacing:-0.118px;">SIGNI</div>
<div class="t" style="left:217.90px;top:325.34px;font-size:12px;font-weight:400;color:#111;letter-spacing:0.484px;">246</div>
<div class="t" style="left:250.10px;top:325.34px;font-size:12px;font-weight:400;color:#111;letter-spacing:-0.686px;">TEST6</div>
<div class="t" style="left:351.70px;top:324.92px;font-size:12.5px;font-weight:400;color:#111;letter-spacing:0.354px;">testovaci_soubor.pdf</div>
<div class="t" style="left:546.70px;top:325.34px;font-size:12px;font-weight:400;color:#111;letter-spacing:-0.480px;">ALL</div>
<div class="t" style="left:686.90px;top:325.09px;font-size:12.3px;font-weight:400;color:#111;letter-spacing:0.164px;">Uzavřený</div>
<div class="t" style="left:217.90px;top:347.34px;font-size:12px;font-weight:400;color:#111;letter-spacing:0.484px;">247</div>
<div class="t" style="left:250.10px;top:347.34px;font-size:12px;font-weight:400;color:#111;letter-spacing:-0.686px;">TEST7</div>
<div class="t" style="left:351.70px;top:346.92px;font-size:12.5px;font-weight:400;color:#111;letter-spacing:0.354px;">testovaci_soubor.pdf</div>
<div class="t" style="left:546.70px;top:347.34px;font-size:12px;font-weight:400;color:#111;letter-spacing:-0.480px;">ALL</div>
<div class="t" style="left:686.90px;top:347.09px;font-size:12.3px;font-weight:400;color:#111;letter-spacing:0.278px;">Odeslaný</div>
<div class="t" style="left:217.90px;top:369.34px;font-size:12px;font-weight:400;color:#111;letter-spacing:0.484px;">248</div>
<div class="t" style="left:250.10px;top:369.34px;font-size:12px;font-weight:400;color:#111;letter-spacing:-0.443px;">TEST6_SIGNE...</div>
<div class="t" style="left:351.70px;top:368.92px;font-size:12.5px;font-weight:400;color:#111;letter-spacing:-0.281px;">TEST6_Signed_202207131426...</div>
<div class="t" style="left:546.70px;top:369.34px;font-size:12px;font-weight:400;color:#111;letter-spacing:-0.118px;">SIGNI</div>
<div class="t" style="left:217.90px;top:391.34px;font-size:12px;font-weight:400;color:#111;letter-spacing:0.484px;">249</div>
<div class="t" style="left:250.10px;top:391.34px;font-size:12px;font-weight:400;color:#111;letter-spacing:-0.541px;">TEST7_CHECK...</div>
<div class="t" style="left:351.70px;top:390.92px;font-size:12.5px;font-weight:400;color:#111;letter-spacing:-0.341px;">TEST7_CheckList_20220713142...</div>
<div class="t" style="left:546.70px;top:391.34px;font-size:12px;font-weight:400;color:#111;letter-spacing:-0.118px;">SIGNI</div>
<div class="t" style="left:217.90px;top:413.34px;font-size:12px;font-weight:400;color:#111;letter-spacing:0.484px;">250</div>
<div class="t" style="left:250.10px;top:413.34px;font-size:12px;font-weight:400;color:#111;letter-spacing:-0.443px;">TEST6_SIGNE...</div>
<div class="t" style="left:351.70px;top:412.92px;font-size:12.5px;font-weight:400;color:#111;letter-spacing:-0.255px;">TEST6_Signed_202207131447...</div>
<div class="t" style="left:546.70px;top:413.34px;font-size:12px;font-weight:400;color:#111;letter-spacing:-0.118px;">SIGNI</div>
<div class="t" style="left:217.90px;top:435.34px;font-size:12px;font-weight:400;color:#111;letter-spacing:0.484px;">251</div>
<div class="t" style="left:250.10px;top:435.34px;font-size:12px;font-weight:400;color:#111;letter-spacing:-0.541px;">TEST6_CHECK...</div>
<div class="t" style="left:351.70px;top:434.92px;font-size:12.5px;font-weight:400;color:#111;letter-spacing:-0.341px;">TEST6_CheckList_20220713144...</div>
<div class="t" style="left:546.70px;top:435.34px;font-size:12px;font-weight:400;color:#111;letter-spacing:-0.118px;">SIGNI</div>
<div class="t" style="left:217.90px;top:457.34px;font-size:12px;font-weight:400;color:#111;letter-spacing:0.484px;">252</div>
<div class="t" style="left:250.10px;top:457.34px;font-size:12px;font-weight:400;color:#111;letter-spacing:-0.047px;">TESTSMLOUVA</div>
<div class="t" style="left:351.70px;top:456.92px;font-size:12.5px;font-weight:400;color:#111;letter-spacing:0.325px;">Testovacismlouva.pdf</div>
<div class="t" style="left:546.70px;top:457.34px;font-size:12px;font-weight:400;color:#111;letter-spacing:-0.480px;">ALL</div>
<div class="t" style="left:686.90px;top:457.09px;font-size:12.3px;font-weight:400;color:#111;letter-spacing:-0.132px;">Čekající</div>
<div class="t" style="left:217.90px;top:479.34px;font-size:12px;font-weight:400;color:#111;letter-spacing:0.484px;">253</div>
<div class="t" style="left:250.10px;top:479.34px;font-size:12px;font-weight:400;color:#111;letter-spacing:-0.284px;">TEST007</div>
<div class="t" style="left:351.70px;top:478.92px;font-size:12.5px;font-weight:400;color:#111;letter-spacing:0.325px;">Testovacismlouva.pdf</div>
<div class="t" style="left:546.70px;top:479.34px;font-size:12px;font-weight:400;color:#111;letter-spacing:-0.480px;">ALL</div>
<div class="t" style="left:686.90px;top:479.09px;font-size:12.3px;font-weight:400;color:#111;letter-spacing:0.278px;">Odeslaný</div>
<div class="t" style="left:217.90px;top:501.34px;font-size:12px;font-weight:400;color:#111;letter-spacing:0.484px;">254</div>
<div class="t" style="left:250.10px;top:501.34px;font-size:12px;font-weight:400;color:#111;letter-spacing:0.060px;">WP001</div>
<div class="t" style="left:351.70px;top:500.92px;font-size:12.5px;font-weight:400;color:#111;letter-spacing:0.354px;">testovaci_soubor.pdf</div>
<div class="t" style="left:546.70px;top:501.34px;font-size:12px;font-weight:400;color:#111;letter-spacing:-0.480px;">ALL</div>
<div class="t" style="left:686.90px;top:501.09px;font-size:12.3px;font-weight:400;color:#111;letter-spacing:0.164px;">Uzavřený</div>
<div class="t" style="left:217.90px;top:523.34px;font-size:12px;font-weight:400;color:#111;letter-spacing:0.484px;">255</div>
<div class="t" style="left:250.10px;top:523.34px;font-size:12px;font-weight:400;color:#111;letter-spacing:0.060px;">WP002</div>
<div class="t" style="left:351.70px;top:522.92px;font-size:12.5px;font-weight:400;color:#111;letter-spacing:0.325px;">Testovacismlouva.pdf</div>
<div class="t" style="left:546.70px;top:523.34px;font-size:12px;font-weight:400;color:#111;letter-spacing:-0.480px;">ALL</div>
<div class="t" style="left:686.90px;top:523.09px;font-size:12.3px;font-weight:400;color:#111;letter-spacing:0.278px;">Odeslaný</div>
<div class="t" style="left:217.90px;top:545.34px;font-size:12px;font-weight:400;color:#111;letter-spacing:0.484px;">256</div>
<div class="t" style="left:250.10px;top:545.34px;font-size:12px;font-weight:400;color:#111;letter-spacing:-0.284px;">TEST008</div>
<div class="t" style="left:351.70px;top:544.92px;font-size:12.5px;font-weight:400;color:#111;letter-spacing:0.325px;">Testovacismlouva.pdf</div>
<div class="t" style="left:546.70px;top:545.34px;font-size:12px;font-weight:400;color:#111;letter-spacing:-0.480px;">ALL</div>
<div class="t" style="left:686.90px;top:545.09px;font-size:12.3px;font-weight:400;color:#111;letter-spacing:-0.132px;">Čekající</div>
<div class="t" style="left:217.90px;top:567.34px;font-size:12px;font-weight:400;color:#111;letter-spacing:0.484px;">257</div>
<div class="t" style="left:250.10px;top:567.34px;font-size:12px;font-weight:400;color:#111;letter-spacing:-0.290px;">WP001_SIGNE...</div>
<div class="t" style="left:351.70px;top:566.92px;font-size:12.5px;font-weight:400;color:#111;letter-spacing:-0.138px;">WP001_Signed_202207211027...</div>
<div class="t" style="left:546.70px;top:567.34px;font-size:12px;font-weight:400;color:#111;letter-spacing:-0.118px;">SIGNI</div>
<div class="t" style="left:217.90px;top:589.34px;font-size:12px;font-weight:400;color:#111;letter-spacing:0.484px;">258</div>
<div class="t" style="left:250.10px;top:589.34px;font-size:12px;font-weight:400;color:#111;letter-spacing:-0.290px;">WP001_SIGNE...</div>
<div class="t" style="left:351.70px;top:588.92px;font-size:12.5px;font-weight:400;color:#111;letter-spacing:-0.138px;">WP001_Signed_202207211027...</div>
<div class="t" style="left:546.70px;top:589.34px;font-size:12px;font-weight:400;color:#111;letter-spacing:-0.118px;">SIGNI</div>
<div class="t" style="left:217.90px;top:611.34px;font-size:12px;font-weight:400;color:#111;letter-spacing:0.484px;">259</div>
<div class="t" style="left:250.10px;top:611.34px;font-size:12px;font-weight:400;color:#111;letter-spacing:-0.369px;">WP001_CHEC...</div>
<div class="t" style="left:351.70px;top:610.92px;font-size:12.5px;font-weight:400;color:#111;letter-spacing:-0.264px;">WP001_CheckList_2022072110...</div>
<div class="t" style="left:546.70px;top:611.34px;font-size:12px;font-weight:400;color:#111;letter-spacing:-0.118px;">SIGNI</div>
<div class="t" style="left:217.90px;top:633.34px;font-size:12px;font-weight:400;color:#111;letter-spacing:0.484px;">260</div>
<div class="t" style="left:250.10px;top:633.34px;font-size:12px;font-weight:400;color:#111;letter-spacing:-0.602px;">TEST_SIGNI</div>
<div class="t" style="left:351.70px;top:632.92px;font-size:12.5px;font-weight:400;color:#111;letter-spacing:0.325px;">Testovacismlouva.pdf</div>
<div class="t" style="left:546.70px;top:633.34px;font-size:12px;font-weight:400;color:#111;letter-spacing:-0.480px;">ALL</div>
<div class="t" style="left:686.90px;top:633.09px;font-size:12.3px;font-weight:400;color:#111;letter-spacing:0.164px;">Uzavřený</div>
<div class="t" style="left:217.90px;top:655.34px;font-size:12px;font-weight:400;color:#111;letter-spacing:0.484px;">261</div>
<div class="t" style="left:250.10px;top:655.34px;font-size:12px;font-weight:400;color:#111;letter-spacing:-0.331px;">TESTOVACISM...</div>
<div class="t" style="left:351.70px;top:654.92px;font-size:12.5px;font-weight:400;color:#111;letter-spacing:-0.047px;">Testovacismlouva_Signed_202...</div>
<div class="t" style="left:546.70px;top:655.34px;font-size:12px;font-weight:400;color:#111;letter-spacing:-0.118px;">SIGNI</div>
<div class="t" style="left:217.90px;top:677.34px;font-size:12px;font-weight:400;color:#111;letter-spacing:0.484px;">262</div>
<div class="t" style="left:250.10px;top:677.34px;font-size:12px;font-weight:400;color:#111;letter-spacing:-0.331px;">TESTOVACISM...</div>
<div class="t" style="left:351.70px;top:676.92px;font-size:12.5px;font-weight:400;color:#111;letter-spacing:-0.137px;">Testovacismlouva_CheckList_2...</div>
<div class="t" style="left:546.70px;top:677.34px;font-size:12px;font-weight:400;color:#111;letter-spacing:-0.118px;">SIGNI</div>
<div class="t" style="left:217.90px;top:699.34px;font-size:12px;font-weight:400;color:#111;letter-spacing:0.484px;">263</div>
<div class="t" style="left:250.10px;top:699.34px;font-size:12px;font-weight:400;color:#111;letter-spacing:0.358px;">DOHODAOM...</div>
<div class="t" style="left:351.70px;top:698.92px;font-size:12.5px;font-weight:400;color:#111;letter-spacing:0.411px;">Dohoda o mlčenlivosti.pdf</div>
<div class="t" style="left:546.70px;top:699.34px;font-size:12px;font-weight:400;color:#111;letter-spacing:-0.480px;">ALL</div>
<div class="t" style="left:259.00px;top:735.72px;font-size:12.5px;font-weight:400;color:#1a60a8;letter-spacing:0.000px;">0</div>
<div class="t" style="left:279.40px;top:736.14px;font-size:12px;font-weight:400;color:#1a60a8;letter-spacing:-0.252px;">Počet záznamů</div>
<div class="t" style="left:830.40px;top:83.82px;font-size:19px;font-weight:400;color:#fff;letter-spacing:-0.419px;">DOHODAOMLCENLIVOSTI</div>
<div class="t" style="left:830.20px;top:120.92px;font-size:12.5px;font-weight:700;color:#fff;letter-spacing:0.368px;">Základní informace</div>
<div class="t" style="left:831.10px;top:277.82px;font-size:12.5px;font-weight:700;color:#fff;letter-spacing:0.276px;">Informace o souboru</div>
<div class="t" style="left:831.10px;top:381.42px;font-size:12.5px;font-weight:700;color:#fff;letter-spacing:0.343px;">Ostatní údaje</div>
<div class="t" style="left:830.90px;top:463.62px;font-size:12.5px;font-weight:700;color:#fff;letter-spacing:0.410px;">Dohoda o mlčenlivosti.pdf</div>
<div class="t" style="left:833.70px;top:147.54px;font-size:12px;font-weight:400;color:#1d5a97;letter-spacing:-0.257px;">Číslo:</div>
<div class="t" style="left:833.70px;top:169.29px;font-size:12px;font-weight:400;color:#1d5a97;letter-spacing:-0.162px;">Typ:</div>
<div class="t" style="left:833.70px;top:191.24px;font-size:12px;font-weight:400;color:#1d5a97;letter-spacing:-0.178px;">Zkratka:</div>
<div class="t" style="left:833.70px;top:213.24px;font-size:12px;font-weight:400;color:#1d5a97;letter-spacing:0.095px;">Citlivost:</div>
<div class="t" style="left:833.70px;top:235.14px;font-size:12px;font-weight:400;color:#1d5a97;letter-spacing:-0.515px;">Stav:</div>
<div class="t" style="left:1159.70px;top:147.24px;font-size:12px;font-weight:400;color:#111;letter-spacing:-0.916px;">263</div>
<div class="t" style="left:1157.60px;top:169.29px;font-size:12px;font-weight:400;color:#111;letter-spacing:-0.280px;">ALL</div>
<div class="t" style="left:1031.60px;top:191.24px;font-size:12px;font-weight:700;color:#111;letter-spacing:-0.300px;">DOHODAOMLCENLIVOSTI</div>
<div class="t" style="left:1124.00px;top:235.14px;font-size:12px;font-weight:400;color:#2a66a8;letter-spacing:-0.166px;">Není DMS</div>
<div class="t" style="left:833.60px;top:303.34px;font-size:12px;font-weight:400;color:#1d5a97;letter-spacing:-0.015px;">Změna souboru:</div>
<div class="t" style="left:833.60px;top:324.84px;font-size:12px;font-weight:400;color:#1d5a97;letter-spacing:-0.133px;">Čas změny souboru:</div>
<div class="t" style="left:833.60px;top:347.04px;font-size:12px;font-weight:400;color:#1d5a97;letter-spacing:-0.142px;">Změnu zapsal:</div>
<div class="t" style="left:1123.40px;top:303.34px;font-size:12px;font-weight:400;color:#111;letter-spacing:-0.562px;">20.07.2022</div>
<div class="t" style="left:1135.40px;top:324.84px;font-size:12px;font-weight:400;color:#111;letter-spacing:-0.531px;">15:16:47</div>
<div class="t" style="left:1164.60px;top:347.04px;font-size:12px;font-weight:400;color:#111;letter-spacing:-0.888px;">K2</div>
<div class="t" style="left:833.60px;top:407.24px;font-size:12px;font-weight:400;color:#1d5a97;letter-spacing:-0.145px;">Zařadil:</div>
<div class="t" style="left:833.60px;top:429.34px;font-size:12px;font-weight:400;color:#1d5a97;letter-spacing:0.110px;">Změněno:</div>
<div class="t" style="left:1106.00px;top:407.24px;font-size:12px;font-weight:400;color:#111;letter-spacing:-1.287px;">K2</div>
<div class="t" style="left:1122.90px;top:407.24px;font-size:12px;font-weight:400;color:#2a70b8;letter-spacing:-0.618px;">21.07.2022</div>
<div class="t" style="left:1020.60px;top:429.34px;font-size:12px;font-weight:400;color:#111;letter-spacing:-0.601px;">21.07.2022 15:16:17</div>
<div class="t" style="left:1122.90px;top:429.34px;font-size:12px;font-weight:400;color:#2a70b8;letter-spacing:-0.618px;">21.07.2022</div>
 <svg class="a" style="left:0;top:390px" width="10" height="16"><path d="M3 2.8L7.8 8L3 13.2Z" fill="#000"/></svg>
 <svg class="a" style="left:1190px;top:390px" width="10" height="16"><path d="M7 2.8L2.2 8L7 13.2Z" fill="#000"/></svg>
 <svg class="a" style="left:814px;top:400px" width="7" height="30"><circle cx="3.7" cy="6" r="1.9" fill="#8fdcfb"/><circle cx="3.7" cy="14.8" r="1.9" fill="#8fdcfb"/><circle cx="3.7" cy="24" r="1.9" fill="#8fdcfb"/></svg>
 <div class="a" style="left:0;top:0;width:1200px;height:766px;border:1px solid #7d7873;border-top-color:#a0a0a0;border-bottom-color:#b4b4b4;border-radius:7px;pointer-events:none"></div>
</div>
</body></html>
